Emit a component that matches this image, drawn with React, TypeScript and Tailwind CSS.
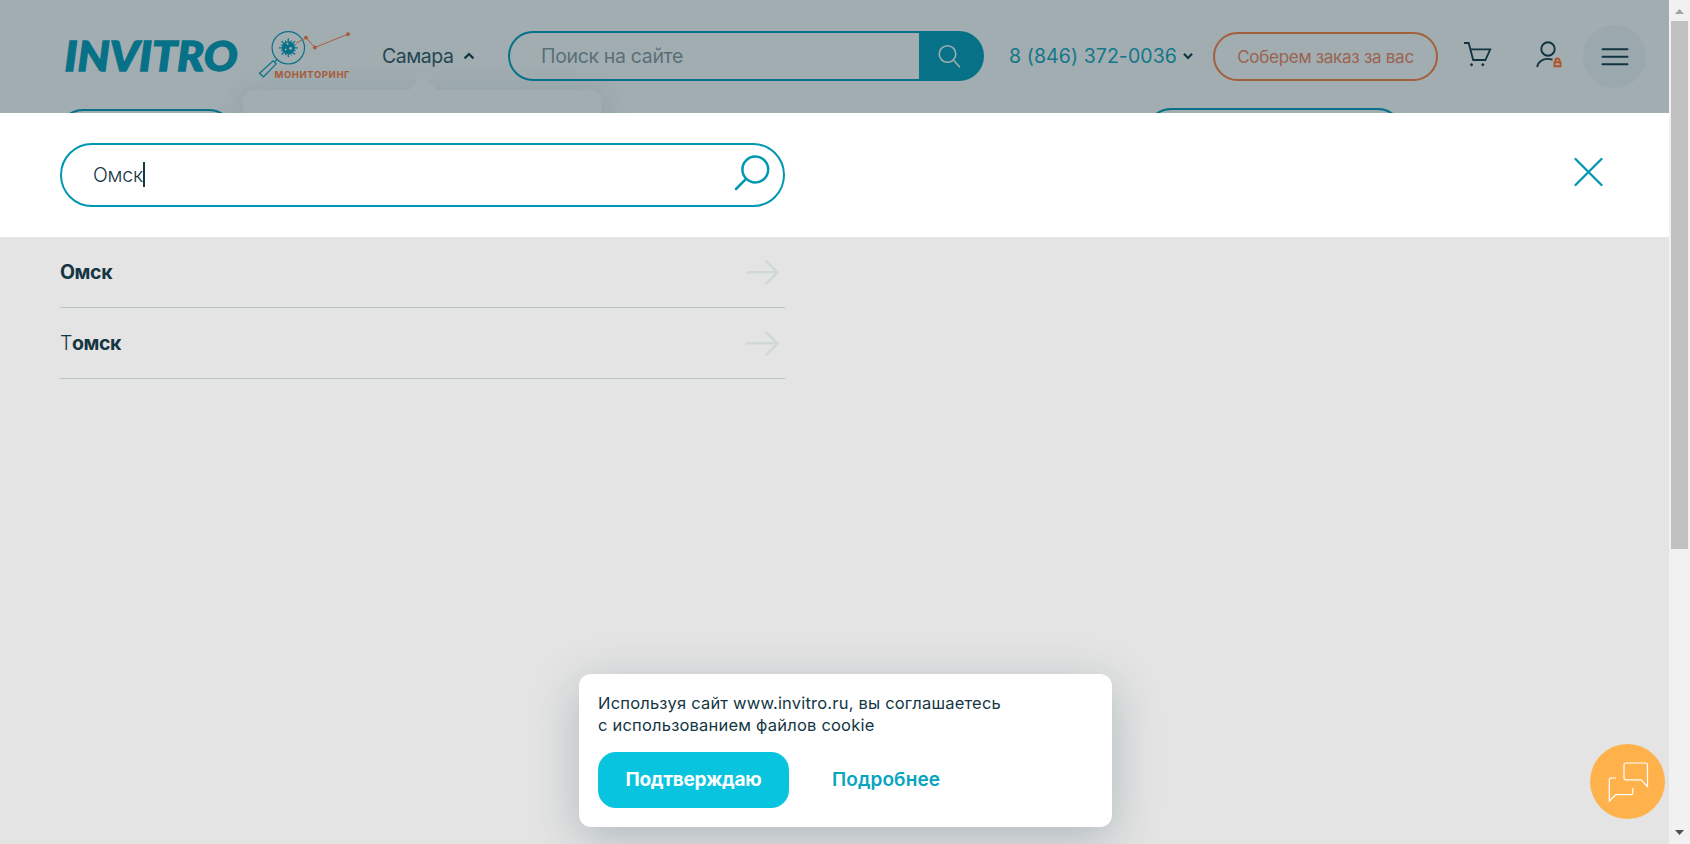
function MonitoringLogo() {
  return (
    <svg className="block h-[50px] w-[94px] shrink-0" viewBox="0 0 94 50">
      <g fill="none" stroke="#077188" strokeWidth="1.2">
        <circle cx="30.3" cy="18.8" r="16.2" />
        <path d="M19 30.500l-2.200 2.200M15.200 31.800l3 3L5.500 47.800l-4-3.600z" />
        <path strokeWidth="1.3" d="M30.3 9.3v19M20.8 18.8h19M23.6 12.1l13.4 13.4M37 12.1L23.6 25.500" />
        <path strokeWidth="1" d="M27.200 11.300l6.200 15M33.400 11.300l-6.200 15M22.800 15.700l15 6.200M37.800 15.700l-15 6.200" />
      </g>
      <circle cx="30.3" cy="18.8" r="6.6" fill="#077188" />
      <g fill="#a1adb1"><circle cx="29.5" cy="14.7" r="1.1" /><circle cx="32.6" cy="19.3" r="1.4" /><circle cx="27.6" cy="20.500" r="0.9" /></g>
      <path d="M38 14.300l10-5.600 8.800 9.800L90 5.200" fill="none" stroke="#a85f41" strokeWidth="1" />
      <g fill="#a85a38"><circle cx="48" cy="8.7" r="1.9" /><circle cx="56.8" cy="18.5" r="1.9" /><circle cx="90" cy="5.2" r="1.9" /></g>
      <text x="16.500" y="48.500" fill="#a85a38" className="font-['Inter',sans-serif] text-[9.500px] font-bold tracking-[0.900px]" textLength="76">МОНИТОРИНГ</text>
    </svg>
  );
}

function Chevron({ up }: { up?: boolean }) {
  return (
    <svg className="block h-[8px] w-[12px] shrink-0" viewBox="0 0 12 8" fill="none" stroke="#123440" strokeWidth="2.2">
      <path d={up ? "M1.6 6.4L6 2l4.4 4.4" : "M2 1.8l4 4.2 4-4.2"} />
    </svg>
  );
}

function Header() {
  return (
    <header className="relative h-[113px] shrink-0 overflow-hidden bg-[#a1adb1]">
      <div className="absolute left-[243px] top-[90px] h-[80px] w-[359px] rounded-xl bg-[#a1adb1] shadow-[0_4px_30px_rgba(30,70,80,0.14)]">
        <svg className="absolute left-[164px] top-[-14px] h-[15px] w-[32px]" viewBox="0 0 32 15"><path d="M1 15L14 2q2-2 4 0l13 13z" fill="#a1adb1" /></svg>
      </div>
      <div className="relative flex h-[108px] items-center">
        <svg className="ml-[55px] block h-[60px] w-[195px] shrink-0" viewBox="0 0 195 60">
          <text x="9.500" y="47" textLength="173" lengthAdjust="spacingAndGlyphs" fill="#077188" stroke="#077188" strokeWidth="1.300" className="font-['Lato',sans-serif] text-[41px] font-black italic">INVITRO</text>
        </svg>
        <div className="ml-[8px]"><MonitoringLogo /></div>
        <div className="ml-[30px] mt-[4px] flex w-[93px] items-center justify-between text-[#254651]">
          <span className="text-[19.5px] leading-6 tracking-[-0.450px]">Самара</span>
          <Chevron up />
        </div>
        <div className="ml-[33px] mt-[4px] flex h-[50px] w-[476px] overflow-hidden rounded-full border-2 border-[#077188] bg-[linear-gradient(90deg,transparent_90%,#077188_90%)]">
          <div className="flex flex-1 items-center pl-[31px] text-[#597077]"><span className="text-[19.5px] leading-6 tracking-[-0.340px]">Поиск на сайте</span></div>
          <div className="flex w-[63px] items-center bg-[#077188] pl-[17px]">
            <svg className="h-[26px] w-[26px]" viewBox="0 0 26 26" fill="none" stroke="#a1adb1" strokeWidth="1.6"><circle cx="11.5" cy="11" r="8.3" /><path d="M17.3 17l6.6 7.2" /></svg>
          </div>
        </div>
        <div className="ml-[25px] mt-[4px] flex w-[185px] items-center justify-between text-[#147789]">
          <span className="text-[19.5px] leading-6 tracking-[0.080px]">8 (846) 372-0036</span>
          <Chevron />
        </div>
        <div className="ml-[19px] mt-[5px] flex h-[49px] w-[225px] items-center justify-center rounded-full border-2 border-[#a3603c] text-[#9b6350]">
          <span className="text-[17px] leading-6 tracking-[-0.280px]">Соберем заказ за вас</span>
        </div>
        <svg className="ml-[25px] mt-[1px] block h-[28px] w-[30px] shrink-0" viewBox="0 0 30 28" fill="none" stroke="#123440" strokeWidth="1.8">
          <path d="M1 2h4.700l4.500 17h12.200l4.800-10.600H7.300" /><circle cx="8.500" cy="23.7" r="1" fill="#123440" strokeWidth="1" /><circle cx="19.800" cy="23.7" r="1" fill="#123440" strokeWidth="1" />
        </svg>
        <svg className="ml-[42px] mt-[1px] block h-[30px] w-[30px] shrink-0" viewBox="0 0 30 30" fill="none" stroke="#123440" strokeWidth="1.9">
          <circle cx="13" cy="9" r="6.7" /><path d="M2 27c1-5 5.500-8.100 10.500-8.100 2 0 3.500.3 5 .8" /><path d="M19.500 22.200h6v4h-6zM20.500 22v-1.500a2 2 0 014 0V22" stroke="#b05326" />
        </svg>
        <div className="ml-[18px] mt-[5px] flex h-[63px] w-[63px] items-center justify-center rounded-full bg-[#9ba8ad]">
          <svg className="h-[20px] w-[28px]" viewBox="0 0 28 20" stroke="#123440" strokeWidth="1.9" strokeLinecap="round"><path d="M1.500 2.300h25M1.500 9.800h25M1.500 17.300h25" /></svg>
        </div>
      </div>
      <div className="relative flex">
        <div className="ml-[58px] mt-px h-[50px] w-[176px] rounded-full border-2 border-[#077188]" />
        <div className="ml-[912px] h-[50px] w-[257px] rounded-full border-2 border-[#077188]" />
      </div>
    </header>
  );
}

function CityRow({ plain, match }: { plain?: string; match: string }) {
  return (
    <li className="flex h-[71px] items-center justify-between border-b border-[#b7c2c2] pr-[6px] text-[#153643]">
      <span className="text-[19.5px] leading-6 tracking-[-0.400px]">{plain && <span className="font-light">{plain}</span>}<b className="font-bold">{match}</b></span>
      <svg className="h-[26px] w-[34px]" viewBox="0 0 34 26" fill="none" stroke="#d0d8da" strokeWidth="2.600" strokeLinecap="round" strokeLinejoin="round"><path d="M2.500 13.300h30M21.500 2.300l11 11-11 11" /></svg>
    </li>
  );
}

export default function App() {
  return (
    <div className="flex h-[844px] w-[1690px] overflow-hidden bg-[#e4e4e4] font-['Inter',sans-serif]">
      <main className="relative flex w-[1669px] shrink-0 flex-col overflow-hidden">
        <Header />
        <section className="flex h-[124px] shrink-0 items-start justify-between bg-white pl-[60px] pr-[64px] pt-[30px]">
          <div className="flex h-[64px] w-[725px] items-center rounded-full border-2 border-[#0097b2] pl-[31px] pr-[12px] text-[#153643]">
            <span className="text-[19.5px] font-light leading-6 tracking-[-0.200px]">Омск</span>
            <span className="mb-px h-[25px] w-[2px] bg-[#153643]" />
            <svg className="mb-[5px] ml-auto h-[38px] w-[38px]" viewBox="0 0 38 38" fill="none" stroke="#0097b2" strokeWidth="2.500" strokeLinecap="round"><circle cx="22.300" cy="15.500" r="12.900" /><path d="M13 24.800L3 35" /></svg>
          </div>
          <svg className="mt-[13px] h-[32px] w-[32px]" viewBox="0 0 32 32" stroke="#0097b2" strokeWidth="2.300" strokeLinecap="round"><path d="M2.500 3l26 26M28.500 3l-26 26" /></svg>
        </section>
        <ul className="ml-[60px] w-[725px]">
          <CityRow match="Омск" />
          <CityRow plain="Т" match="омск" />
        </ul>
        <div className="absolute left-[579px] top-[674px] flex h-[153px] w-[533px] flex-col rounded-xl bg-white px-[19px] pt-[18px] text-[#153643] shadow-[0_12px_48px_rgba(20,60,70,0.25)]">
          <p className="text-[16.5px] leading-[22px] tracking-[0.200px]">Используя сайт www.invitro.ru, вы соглашаетесь<br />с использованием файлов cookie</p>
          <div className="mt-[16px] flex items-center">
            <button className="flex h-[56px] w-[191px] items-center justify-center rounded-[18px] bg-[#08c4de] text-white"><span className="text-[19px] font-bold tracking-[-0.250px]">Подтверждаю</span></button>
            <span className="ml-[43px] text-[19px] font-semibold tracking-[0.100px] text-[#08a5bf]">Подробнее</span>
          </div>
        </div>
        <button className="absolute left-[1590px] top-[744px] h-[75px] w-[75px] rounded-full bg-[#ffb24c]">
          <svg className="block h-[75px] w-[75px]" viewBox="0 0 75 75" fill="none" stroke="#fff" strokeWidth="1.200"><path d="M35 19h20.500a2 2 0 012 2v21.500l-6.500-6.700H36a2 2 0 01-2-2V20.500A1.500 1.500 0 0135.500 19M26 34h-5.200a1.500 1.500 0 00-1.500 1.500V57l6.500-6.300H41a1.800 1.800 0 001.800-1.800V44" /></svg>
        </button>
      </main>
      <aside className="flex w-[21px] flex-col items-center bg-[#f1f1f1]">
        <svg className="h-[21px] w-[17px] shrink-0" viewBox="0 0 17 21"><path d="M4 14l4.500-5 4.500 5z" fill="#a3a3a3" /></svg>
        <div className="h-[528px] w-[17px] bg-[#c1c1c1]" />
        <svg className="mt-auto h-[21px] w-[17px] shrink-0" viewBox="0 0 17 21"><path d="M4 7l4.500 5L13 7z" fill="#505050" /></svg>
      </aside>
    </div>
  );
}
